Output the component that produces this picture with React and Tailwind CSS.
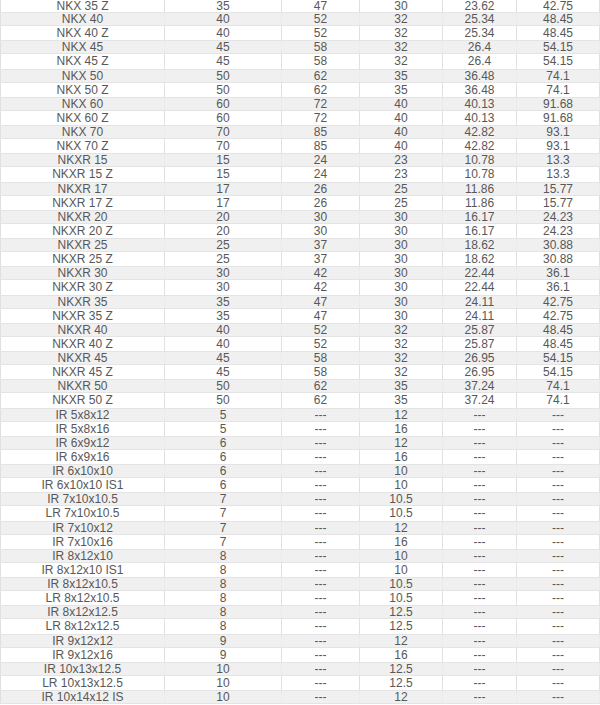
import React from 'react';

const nk = [
    ['NKX 35 Z', '35', '47', '30', '23.62', '42.75'],
    ['NKX 40', '40', '52', '32', '25.34', '48.45'],
    ['NKX 40 Z', '40', '52', '32', '25.34', '48.45'],
    ['NKX 45', '45', '58', '32', '26.4', '54.15'],
    ['NKX 45 Z', '45', '58', '32', '26.4', '54.15'],
    ['NKX 50', '50', '62', '35', '36.48', '74.1'],
    ['NKX 50 Z', '50', '62', '35', '36.48', '74.1'],
    ['NKX 60', '60', '72', '40', '40.13', '91.68'],
    ['NKX 60 Z', '60', '72', '40', '40.13', '91.68'],
    ['NKX 70', '70', '85', '40', '42.82', '93.1'],
    ['NKX 70 Z', '70', '85', '40', '42.82', '93.1'],
    ['NKXR 15', '15', '24', '23', '10.78', '13.3'],
    ['NKXR 15 Z', '15', '24', '23', '10.78', '13.3'],
    ['NKXR 17', '17', '26', '25', '11.86', '15.77'],
    ['NKXR 17 Z', '17', '26', '25', '11.86', '15.77'],
    ['NKXR 20', '20', '30', '30', '16.17', '24.23'],
    ['NKXR 20 Z', '20', '30', '30', '16.17', '24.23'],
    ['NKXR 25', '25', '37', '30', '18.62', '30.88'],
    ['NKXR 25 Z', '25', '37', '30', '18.62', '30.88'],
    ['NKXR 30', '30', '42', '30', '22.44', '36.1'],
    ['NKXR 30 Z', '30', '42', '30', '22.44', '36.1'],
    ['NKXR 35', '35', '47', '30', '24.11', '42.75'],
    ['NKXR 35 Z', '35', '47', '30', '24.11', '42.75'],
    ['NKXR 40', '40', '52', '32', '25.87', '48.45'],
    ['NKXR 40 Z', '40', '52', '32', '25.87', '48.45'],
    ['NKXR 45', '45', '58', '32', '26.95', '54.15'],
    ['NKXR 45 Z', '45', '58', '32', '26.95', '54.15'],
    ['NKXR 50', '50', '62', '35', '37.24', '74.1'],
    ['NKXR 50 Z', '50', '62', '35', '37.24', '74.1'],
];

const ir = [
    ['IR 5x8x12', '5', '12'],
    ['IR 5x8x16', '5', '16'],
    ['IR 6x9x12', '6', '12'],
    ['IR 6x9x16', '6', '16'],
    ['IR 6x10x10', '6', '10'],
    ['IR 6x10x10 IS1', '6', '10'],
    ['IR 7x10x10.5', '7', '10.5'],
    ['LR 7x10x10.5', '7', '10.5'],
    ['IR 7x10x12', '7', '12'],
    ['IR 7x10x16', '7', '16'],
    ['IR 8x12x10', '8', '10'],
    ['IR 8x12x10 IS1', '8', '10'],
    ['IR 8x12x10.5', '8', '10.5'],
    ['LR 8x12x10.5', '8', '10.5'],
    ['IR 8x12x12.5', '8', '12.5'],
    ['LR 8x12x12.5', '8', '12.5'],
    ['IR 9x12x12', '9', '12'],
    ['IR 9x12x16', '9', '16'],
    ['IR 10x13x12.5', '10', '12.5'],
    ['LR 10x13x12.5', '10', '12.5'],
    ['IR 10x14x12 IS', '10', '12'],
];

const rows = [
    ...nk,
    ...ir.map(([name, d, b]) => [name, d, '---', b, '---', '---']),
];

export default function App() {
    return (
        <div
            className="h-[705px] w-[600px] overflow-hidden bg-white text-[12px] text-[#585858]"
            style={{ fontFamily: '"Liberation Sans", Arial, sans-serif' }}
        >
            {rows.map((row, i) => {
                const shaded = i % 2 === 1;
                return (
                    <div
                        key={i}
                        className={
                            i === 0
                                ? 'grid h-[12px] grid-cols-[165px_117px_78px_83px_74px_83px] bg-white'
                                : shaded
                                    ? 'grid h-[14.14px] grid-cols-[165px_117px_78px_83px_74px_83px] border-y border-[#e4e4e4] bg-[#f0f0f0]'
                                    : 'grid h-[14.14px] grid-cols-[165px_117px_78px_83px_74px_83px] bg-white'
                        }
                    >
                        {row.map((cell, j) => (
                            <div
                                key={j}
                                className={
                                    shaded
                                        ? 'flex items-center justify-center border-r border-[#ebebeb] leading-none whitespace-nowrap first:border-l first:border-l-[#e0e0e0]'
                                        : 'flex items-center justify-center border-r border-[#e0e0e0] leading-none whitespace-nowrap first:border-l'
                                }
                            >
                                {cell}
                            </div>
                        ))}
                    </div>
                );
            })}
        </div>
    );
}
